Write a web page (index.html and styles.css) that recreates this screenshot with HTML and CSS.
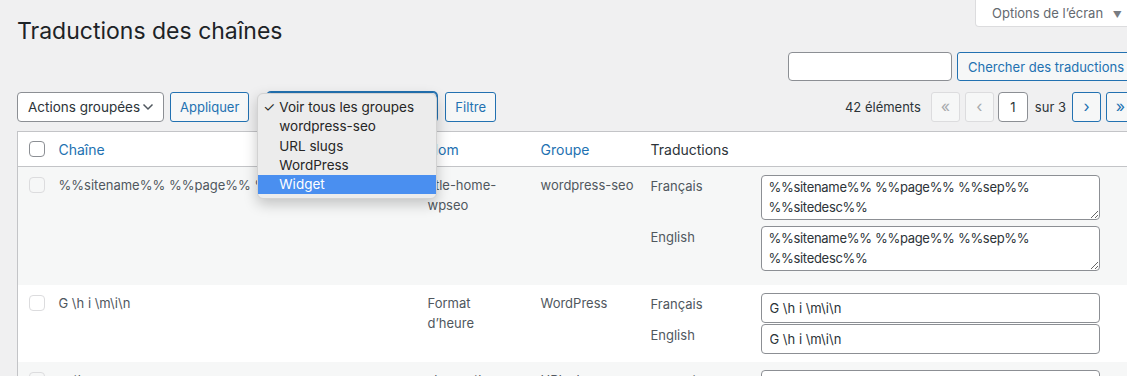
FILE: index.html
```html
<!DOCTYPE html>
<html lang="fr">

<head>
    <meta charset="UTF-8">
    <title>Traductions des chaînes</title>
    <link rel="stylesheet" href="styles.css">
</head>

<body>
    <div class="wrap">
        <div class="top">
            <h1>Traductions des chaînes</h1>
            <button class="screen-tab">Options de l’écran <span class="arrow">▼</span></button>
        </div>

        <div class="search-box">
            <input type="search" class="search-input">
            <button class="button">Chercher des traductions</button>
        </div>

        <div class="tablenav">
            <div class="actions">
                <div class="select bulk">
                    <span>Actions groupées</span>
                    <svg width="12" height="8" viewBox="0 0 12 8"><path d="M1.5 1.5 6 6l4.5-4.5" fill="none" stroke="#50575e" stroke-width="1.5"/></svg>
                </div>
                <button class="button">Appliquer</button>
                <div class="group-filter">
                    <div class="select groups"></div>
                    <!-- open native menu -->
                    <ul class="menu">
                        <li><span class="check">✓</span>Voir tous les groupes</li>
                        <li>wordpress-seo</li>
                        <li>URL slugs</li>
                        <li>WordPress</li>
                        <li class="hover">Widget</li>
                    </ul>
                </div>
                <button class="button">Filtre</button>
            </div>

            <div class="pages">
                <span class="count">42 éléments</span>
                <span class="page-btn disabled">«</span>
                <span class="page-btn disabled">‹</span>
                <input class="current-page" type="text" value="1">
                <span class="total">sur 3</span>
                <span class="page-btn">›</span>
                <span class="page-btn">»</span>
            </div>
        </div>

        <table class="strings">
            <colgroup>
                <col class="c-cb">
                <col class="c-string">
                <col class="c-name">
                <col class="c-group">
                <col>
            </colgroup>
            <thead>
                <tr>
                    <th class="cb"><span class="box head"></span></th>
                    <th><a href="#">Chaîne</a></th>
                    <th><a href="#">Nom</a></th>
                    <th><a href="#">Groupe</a></th>
                    <th>Traductions</th>
                </tr>
            </thead>
            <tbody>
                <tr class="alt">
                    <td class="cb"><span class="box"></span></td>
                    <td class="string">%%sitename%% %%page%% %%sep%% %%sitedesc%%</td>
                    <td class="name">title-home-wpseo</td>
                    <td>wordpress-seo</td>
                    <td class="trans">
                        <div class="tr-row">
                            <label>Français</label>
                            <textarea>%%sitename%% %%page%% %%sep%% %%sitedesc%%</textarea>
                        </div>
                        <div class="tr-row">
                            <label>English</label>
                            <textarea>%%sitename%% %%page%% %%sep%% %%sitedesc%%</textarea>
                        </div>
                    </td>
                </tr>
                <tr>
                    <td class="cb"><span class="box"></span></td>
                    <td class="string">G \h i \m\i\n</td>
                    <td class="name">Format d’heure</td>
                    <td>WordPress</td>
                    <td class="trans">
                        <div class="tr-row short">
                            <label>Français</label>
                            <input type="text" value="G \h i \m\i\n">
                        </div>
                        <div class="tr-row short">
                            <label>English</label>
                            <input type="text" value="G \h i \m\i\n">
                        </div>
                    </td>
                </tr>
                <tr class="alt">
                    <td class="cb"><span class="box"></span></td>
                    <td class="string">author</td>
                    <td class="name">slug_author</td>
                    <td>URL slugs</td>
                    <td class="trans">
                        <div class="tr-row short">
                            <label>Français</label>
                            <input type="text" value="">
                        </div>
                    </td>
                </tr>
            </tbody>
        </table>
    </div>
</body>

</html>
```

FILE: styles.css
```css
* {
    box-sizing: border-box;
}

body {
    margin: 0;
    background: #f0f0f1;
    font-family: Inter, "Noto Sans", sans-serif;
    font-size: 13px;
    color: #3c434a;
    overflow: hidden;
}

.wrap {
    width: 1118px;
    margin-left: 17px;
}

.top {
    display: flex;
    justify-content: space-between;
    align-items: flex-start;
    height: 46px;
}

h1 {
    margin: 16px 0 0;
    font-size: 23px;
    font-weight: 400;
    line-height: 30px;
    color: #1d2327;
}

.screen-tab {
    width: 160px;
    height: 27px;
    padding: 0 0 0 16px;
    background: #fff;
    border: 1px solid #dcdcde;
    border-top: 0;
    border-radius: 0 0 4px 4px;
    font-family: inherit;
    font-size: 13px;
    color: #646970;
    text-align: left;
}

.screen-tab .arrow {
    font-size: 9px;
    margin-left: 6px;
    color: #787c82;
}

.search-box {
    display: flex;
    justify-content: flex-end;
    gap: 5px;
    margin-top: 6px;
}

.search-input {
    width: 164px;
    height: 29px;
    border: 1px solid #8c8f94;
    border-radius: 4px;
    background: #fff;
}

.button {
    height: 29px;
    padding: 0 10px;
    background: #f6f7f7;
    border: 1px solid #2271b1;
    border-radius: 3px;
    color: #2271b1;
    font-family: inherit;
    font-size: 13px;
    white-space: nowrap;
}

.tablenav {
    display: flex;
    justify-content: space-between;
    align-items: center;
    margin-top: 11px;
    height: 30px;
}

.actions {
    display: flex;
    align-items: center;
}

.actions .button {
    height: 30px;
    padding: 0 9px;
}

.select {
    display: flex;
    align-items: center;
    justify-content: space-between;
    height: 30px;
    padding: 0 9px 0 10px;
    background: #fff;
    border: 1px solid #8c8f94;
    border-radius: 4px;
    font-size: 13.5px;
    color: #2c3338;
    white-space: nowrap;
}

.bulk {
    width: 147px;
    margin-right: 6px;
}

.group-filter {
    position: relative;
    margin: 0 8px 0 18px;
}

.groups {
    width: 170px;
    border-color: #2271b1;
    box-shadow: 0 0 0 1px #2271b1;
}

.menu {
    position: absolute;
    top: 1px;
    left: -10px;
    width: 180px;
    margin: 0;
    padding: 4px 0;
    list-style: none;
    background: #ececec;
    border: 1px solid #d2d2d2;
    border-radius: 6px;
    box-shadow: 0 5px 14px rgba(0, 0, 0, 0.22);
    font-size: 13.5px;
    color: #262626;
}

.menu li {
    height: 19.3px;
    line-height: 19px;
    padding-left: 21px;
    position: relative;
}

.menu .check {
    position: absolute;
    left: 5px;
}

.menu .hover {
    background: #4a8ff0;
    color: #fff;
}

.pages {
    display: flex;
    align-items: center;
    gap: 5px;
}

.count {
    margin-right: 5px;
    color: #2c3338;
}

.page-btn {
    width: 29px;
    height: 30px;
    display: flex;
    align-items: center;
    justify-content: center;
    background: #f6f7f7;
    border: 1px solid #2271b1;
    border-radius: 3px;
    color: #2271b1;
    font-size: 16px;
    padding-bottom: 2px;
}

.page-btn.disabled {
    border-color: #dcdcde;
    color: #a7aaad;
}

.current-page {
    width: 30px;
    height: 30px;
    margin-left: -1px;
    border: 1px solid #8c8f94;
    border-radius: 4px;
    text-align: center;
    font-family: inherit;
    font-size: 13px;
    color: #2c3338;
}

.total {
    margin: 0 1px 0 2px;
    color: #2c3338;
}

.strings {
    width: 1118px;
    margin-top: 9px;
    border-collapse: collapse;
    table-layout: fixed;
    background: #fff;
    border: 1px solid #c3c4c7;
}

.c-cb {
    width: 33px;
}

.c-string {
    width: 369px;
}

.c-name {
    width: 113px;
}

.c-group {
    width: 110px;
}

.strings th {
    height: 35px;
    padding: 0 8px;
    text-align: left;
    font-weight: 400;
    font-size: 14px;
    color: #2c3338;
    border-bottom: 1px solid #c3c4c7;
}

.strings th a {
    color: #2271b1;
    text-decoration: none;
}

.strings td {
    padding: 8px 8px;
    vertical-align: top;
    line-height: 20px;
    color: #50575e;
}

.strings td.string {
    white-space: nowrap;
    overflow: hidden;
}

.strings td.name {
    padding-right: 22px;
}

.strings tr.alt td {
    background: #f6f7f7;
}

.strings .cb {
    padding: 0 0 0 11px;
}

.strings td.cb {
    padding-top: 10px;
}

.box {
    display: block;
    width: 16px;
    height: 16px;
    border: 1px solid #dcdcde;
    border-radius: 4px;
}

.box.head {
    border-color: #8c8f94;
    background: #fff;
}

.trans {
    padding-right: 36px;
}

.tr-row {
    display: flex;
    margin-bottom: 6px;
}

.tr-row label {
    width: 110px;
    padding-top: 1px;
    flex-shrink: 0;
}

.tr-row textarea {
    width: 339px;
    height: 45px;
    padding: 1px 7px;
    border: 1px solid #8c8f94;
    border-radius: 4px;
    font-family: inherit;
    font-size: 13px;
    letter-spacing: -0.3px;
    line-height: 20px;
    color: #2c3338;
    resize: vertical;
}

.tr-row.short {
    margin-bottom: 1px;
}

.tr-row.short:last-child {
    margin-bottom: 0;
}

.tr-row input {
    width: 339px;
    height: 30px;
    padding: 0 8px;
    border: 1px solid #8c8f94;
    border-radius: 4px;
    font-family: inherit;
    font-size: 13px;
    color: #2c3338;
    background: #fff;
}
```
